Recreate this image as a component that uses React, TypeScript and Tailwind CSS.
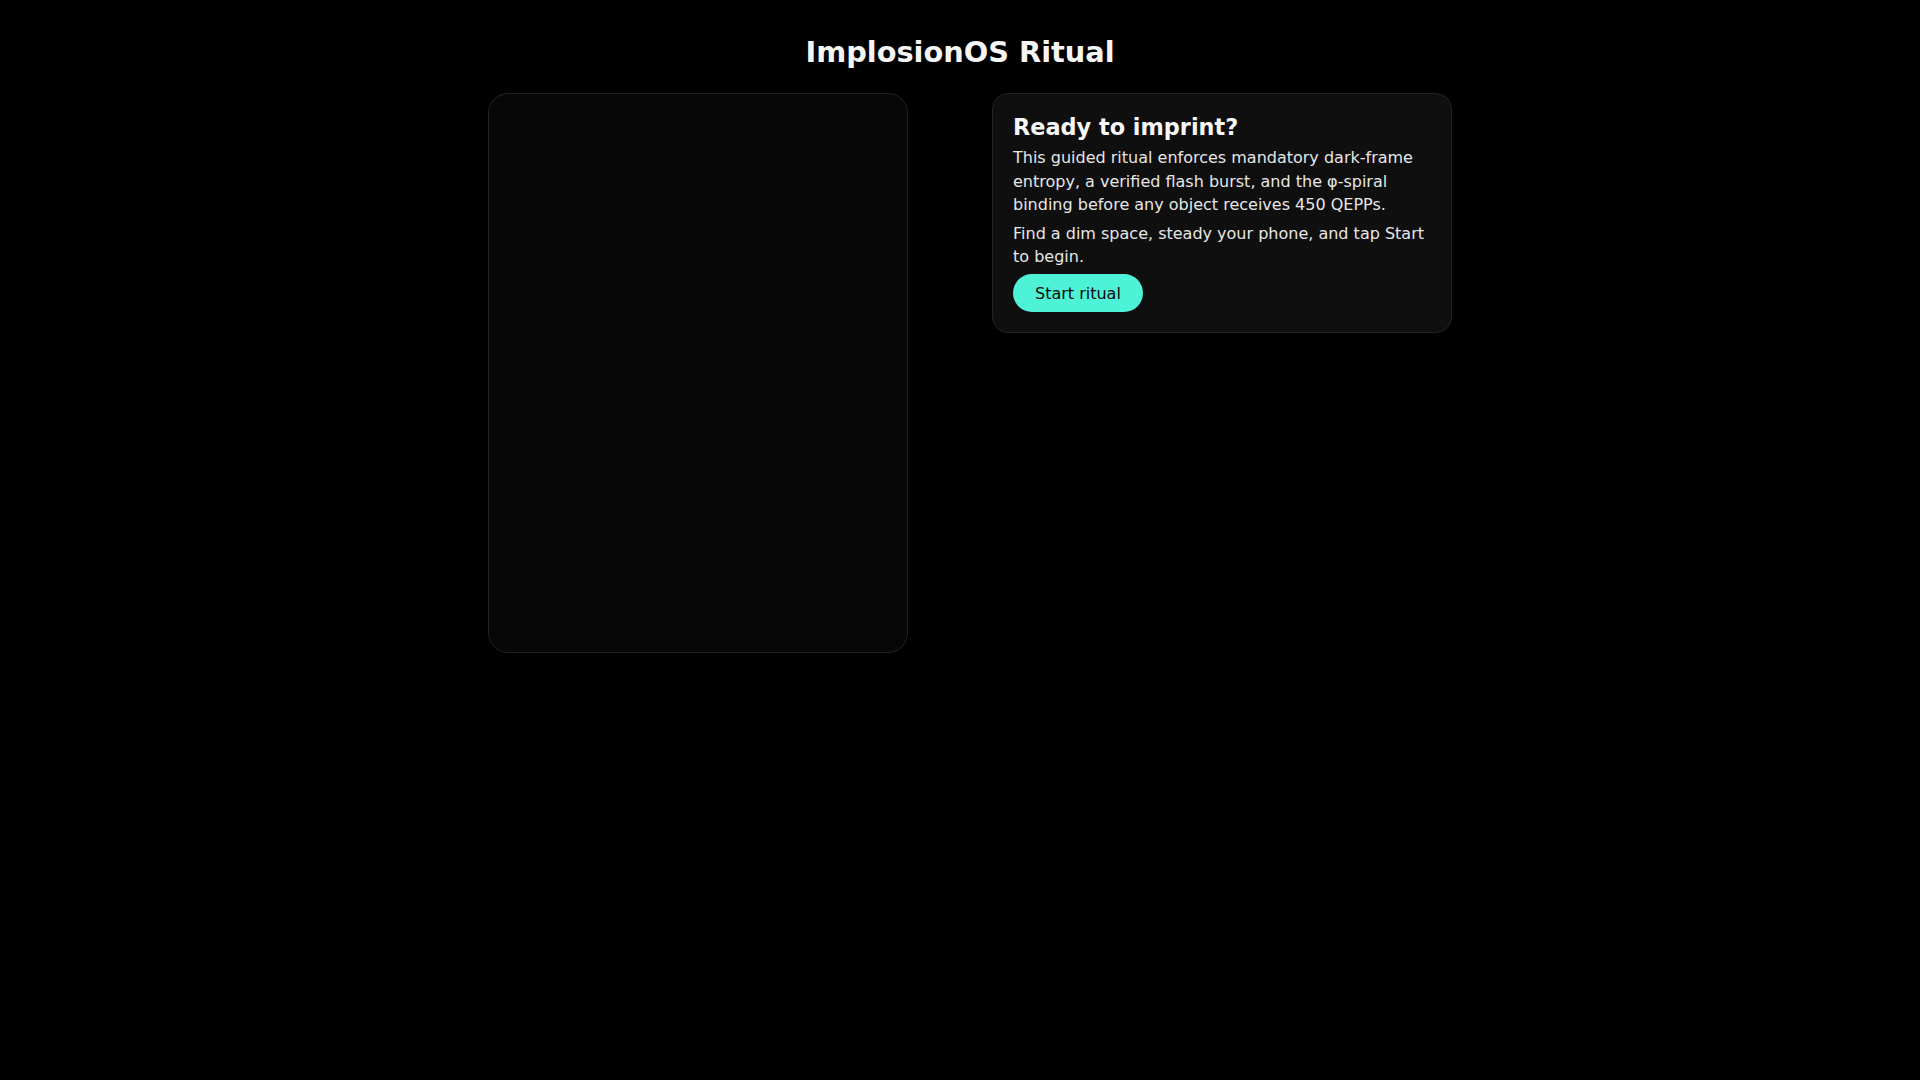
export default function App() {
  return (
    <div
      className="min-h-screen bg-black text-[#f5f5f5] pt-[35px]"
      style={{ fontFamily: '"DejaVu Sans", Verdana, sans-serif' }}
    >
      <h1 className="text-center text-[1.8rem] font-bold leading-[1.2] mb-[23px]">
        ImplosionOS Ritual
      </h1>

      <div className="flex justify-center">
        <div className="flex items-start gap-[84px] pl-[20px]">
          {/* camera viewport */}
          <div className="w-[420px] h-[560px] rounded-[20px] border border-[#222222] bg-[#070707]" />

          {/* intro card */}
          <div className="w-[460px] rounded-2xl border border-[#232323] bg-[#0f0f0f] p-5 flex flex-col gap-1.5">
            <h2 className="text-[1.4rem] font-bold leading-[1.2] text-[#f7f7f7]">
              Ready to imprint?
            </h2>
            <p className="text-base leading-[1.45] text-[#e6e6e6]">
              This guided ritual enforces mandatory dark-frame entropy, a
              verified flash burst, and the φ-spiral binding before any object
              receives 450 QEPPs.
            </p>
            <p className="text-base leading-[1.45] text-[#e6e6e6]">
              Find a dim space, steady your phone, and tap Start to begin.
            </p>
            <div>
              <button
                type="button"
                className="h-[38px] px-[22px] rounded-full bg-[#4ef2d6] text-[#0a0a0a] text-base leading-[1.45]"
              >
                Start ritual
              </button>
            </div>
          </div>
        </div>
      </div>
    </div>
  );
}
